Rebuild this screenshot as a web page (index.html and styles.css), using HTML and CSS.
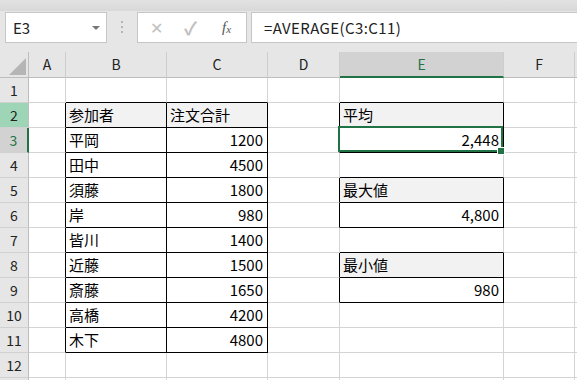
FILE: index.html
```html
<!doctype html>
<html>
<head>
<meta charset="utf-8">
<title>平均・最大値・最小値</title>
<link rel="stylesheet" href="styles.css">
</head>
<body>
<div class="bar">
    <div class="namebox">E3<span class="drop"></span></div>
    <div class="grip"><i></i><i></i><i></i></div>
    <div class="fxbox">
        <span class="ic x">✕</span>
        <span class="ic ok">✓</span>
        <span class="ic fx">f<sub>x</sub></span>
    </div>
    <div class="formula">=AVERAGE(C3:C11)</div>
</div>

<div class="sheet">
    <!-- 列見出し -->
    <div class="ch corner"></div><div class="ch">A</div><div class="ch">B</div><div class="ch">C</div><div class="ch">D</div><div class="ch sel">E</div><div class="ch">F</div><div class="ch"></div>

    <div class="rh">1</div><div></div><div class="bt"></div><div class="bt"></div><div></div><div class="bt"></div><div></div><div></div>
    <div class="rh r2">2</div><div class="bl"></div><div class="t hd">参加者</div><div class="t hd">注文合計</div><div class="bl"></div><div class="t hd">平均</div><div></div><div></div>
    <div class="rh sel">3</div><div class="bl"></div><div class="t">平岡</div><div class="t num">1200</div><div class="bl"></div><div class="t num cur">2,448</div><div></div><div></div>
    <div class="rh">4</div><div class="bl"></div><div class="t">田中</div><div class="t num">4500</div><div></div><div class="bt"></div><div></div><div></div>
    <div class="rh">5</div><div class="bl"></div><div class="t">須藤</div><div class="t num">1800</div><div class="bl"></div><div class="t hd">最大値</div><div></div><div></div>
    <div class="rh">6</div><div class="bl"></div><div class="t">岸</div><div class="t num">980</div><div class="bl"></div><div class="t num">4,800</div><div></div><div></div>
    <div class="rh">7</div><div class="bl"></div><div class="t">皆川</div><div class="t num">1400</div><div></div><div class="bt"></div><div></div><div></div>
    <div class="rh">8</div><div class="bl"></div><div class="t">近藤</div><div class="t num">1500</div><div class="bl"></div><div class="t hd">最小値</div><div></div><div></div>
    <div class="rh">9</div><div class="bl"></div><div class="t">斎藤</div><div class="t num">1650</div><div class="bl"></div><div class="t num">980</div><div></div><div></div>
    <div class="rh">10</div><div class="bl"></div><div class="t">高橋</div><div class="t num">4200</div><div></div><div></div><div></div><div></div>
    <div class="rh">11</div><div class="bl"></div><div class="t">木下</div><div class="t num">4800</div><div></div><div></div><div></div><div></div>
    <div class="rh">12</div><div></div><div></div><div></div><div></div><div></div><div></div><div></div>
    <div class="rh"></div><div></div><div></div><div></div><div></div><div></div><div></div><div></div>
</div>
</body>
</html>
```
FILE: styles.css
```css
*{ margin:0; padding:0; }
body{ width:577px; height:380px; overflow:hidden; background:#e6e6e6; font-family:"Noto Sans CJK JP","Noto Sans",sans-serif; color:#000; }

/* 数式バー */
.bar{ height:52px; box-sizing:border-box; padding-top:12px; display:flex; align-items:flex-start;
      background:linear-gradient(#e2e2e2,#d8d8d8) 0 0/100% 11px no-repeat, #e6e6e6; }
.namebox{ margin-left:5px; width:102px; height:31px; box-sizing:border-box; border:1px solid #c6c6c6; background:#fff;
          display:flex; align-items:center; padding-left:7px; font-size:15px; color:#222; }
.drop{ margin-left:auto; margin-right:6px; width:0; height:0; border-left:4px solid transparent; border-right:4px solid transparent; border-top:4px solid #777; }
.grip{ margin-left:14px; margin-top:9px; width:2px; display:flex; flex-direction:column; gap:3px; }
.grip i{ display:block; width:2px; height:2px; background:#b4b4b4; }
.fxbox{ margin-left:14px; width:110px; height:31px; box-sizing:border-box; border:1px solid #c6c6c6; background:#fff; position:relative; }
.ic{ position:absolute; top:5px; color:#c0c0c0; font-size:16px; line-height:18px; }
.ic.x{ left:12px; }
.ic.ok{ left:46px; font-size:18px; font-weight:bold; }
.ic.fx{ left:84px; color:#555; font-family:"Liberation Serif",serif; font-style:italic; font-size:15px; }
.ic.fx sub{ font-size:11px; vertical-align:-1px; }
.formula{ margin-left:4px; flex:1; height:31px; box-sizing:border-box; border:1px solid #c6c6c6; border-right:0; background:#fff;
          padding-left:12px; font-size:15px; letter-spacing:0.4px; line-height:29px; color:#222; }

/* シート */
.sheet{ display:grid; grid-template-columns:29px 37px 101px 101px 72px 164px 71px 1fr; grid-template-rows:26px; grid-auto-rows:25px;
        height:328px; overflow:hidden; background:#fff; }
.sheet > div{ box-sizing:border-box; border-right:1px solid #d4d4d4; border-bottom:1px solid #d4d4d4; padding:0 3px;
              font-size:15px; line-height:24px; white-space:nowrap; overflow:hidden; }
.sheet > .ch{ background:#e6e6e6; border-right-color:#cdcdcd; border-bottom-color:#bdbdbd; text-align:center; font-size:14px; line-height:25px; color:#222; }
.sheet > .ch.sel{ background:#d2d2d2; border-bottom:2px solid #217346; color:#217346; }
.sheet > .corner{ position:relative; border-right-color:#bdbdbd; }
.corner:after{ content:""; position:absolute; right:2px; bottom:2px; width:0; height:0; border-left:17px solid transparent; border-bottom:17px solid #b5b5b5; }
.sheet > .rh{ background:#e6e6e6; border-right-color:#bdbdbd; border-bottom-color:#d0d0d0; text-align:center; font-size:14px; color:#222; padding:0; }
.sheet > .rh.r2{ background:#9fd5b7; }
.sheet > .rh.sel{ background:#d2d2d2; border-right:2px solid #217346; color:#217346; }

/* 罫線 */
.sheet > .t{ border-right-color:#000; border-bottom-color:#000; }
.sheet > .bl{ border-right-color:#000; }
.sheet > .bt{ border-bottom-color:#000; }
.sheet > .hd{ background:#f2f2f2; }
.sheet > .num{ text-align:right; padding-right:4px; }

/* 選択セル */
.cur{ position:relative; overflow:visible !important; }
.cur:before{ content:""; position:absolute; top:-2px; left:-2px; right:0; bottom:0; border:2px solid #217346; z-index:1; }
.cur:after{ content:""; position:absolute; right:-1px; bottom:-2px; width:6px; height:6px; background:#217346; box-shadow:0 0 0 1px #fff; z-index:2; }
```
